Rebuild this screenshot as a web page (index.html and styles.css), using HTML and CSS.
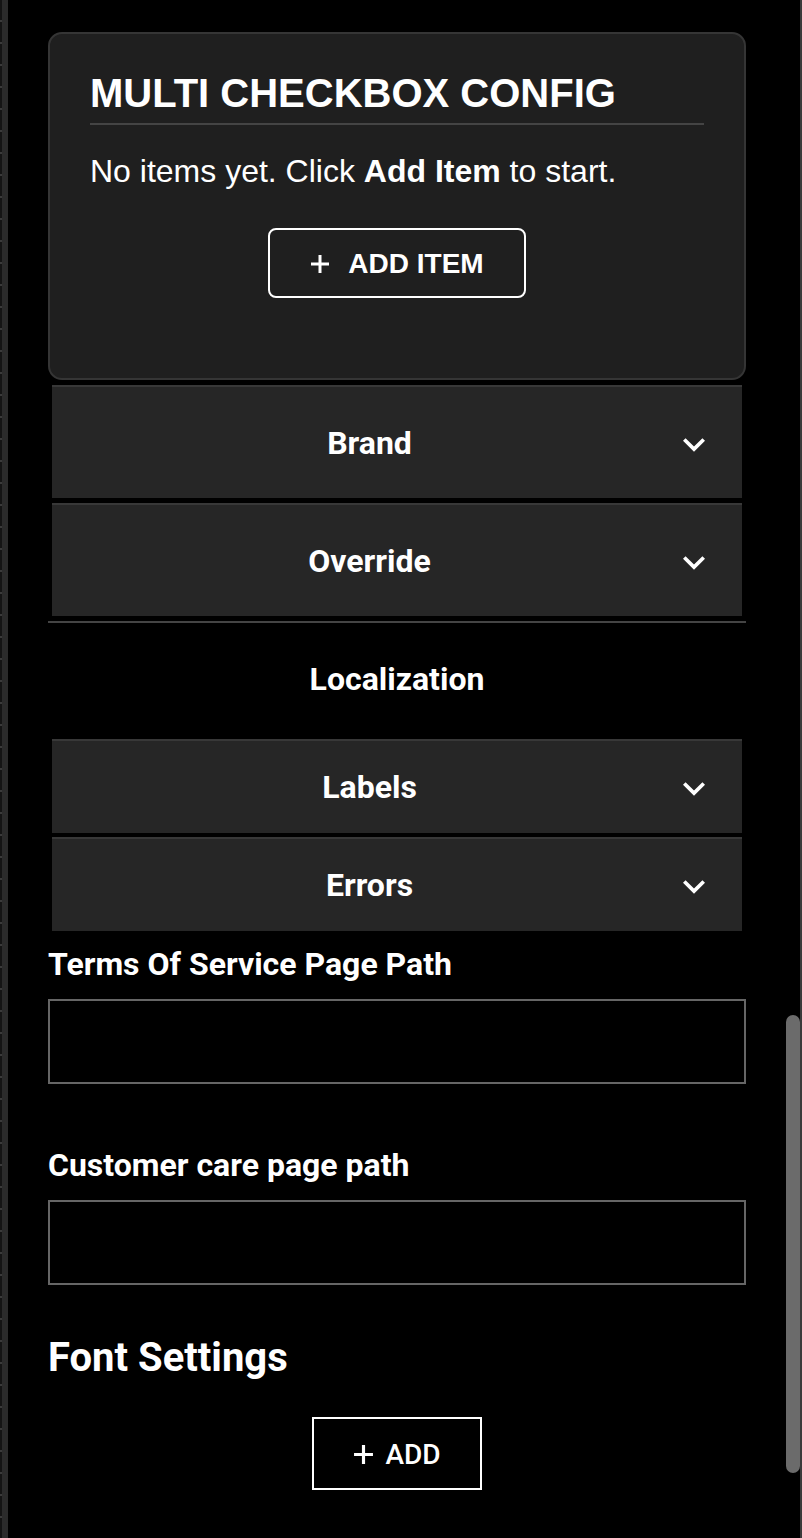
FILE: index.html
```html
<!DOCTYPE html>
<html lang="en">
<head>
<meta charset="utf-8">
<title>Config</title>
<link rel="stylesheet" href="styles.css">
</head>
<body>
<div class="app">
  <div class="gutter"></div>
  <main class="panel">
    <section class="card">
      <h2 class="card-title">Multi Checkbox Config</h2>
      <p class="card-text">No items yet. Click <strong>Add Item</strong> to start.</p>
      <div class="btn-row">
        <button class="btn-item" type="button">
          <svg class="plus" width="20" height="20" viewBox="0 0 20 20"><path d="M10 1v18M1 10h18" stroke="#fff" stroke-width="3" fill="none"/></svg>
          <span>ADD ITEM</span>
        </button>
      </div>
    </section>

    <div class="accordion tall">
      <div class="acc-item">
        <span class="acc-title">Brand</span>
        <svg class="chev" width="22" height="14" viewBox="6 8.5 12 7.6" preserveAspectRatio="none"><path d="M16.59 8.59L12 13.17 7.41 8.59 6 10l6 6 6-6z" fill="#fff"/></svg>
      </div>
      <div class="acc-item">
        <span class="acc-title">Override</span>
        <svg class="chev" width="22" height="14" viewBox="6 8.5 12 7.6" preserveAspectRatio="none"><path d="M16.59 8.59L12 13.17 7.41 8.59 6 10l6 6 6-6z" fill="#fff"/></svg>
      </div>
    </div>

    <div class="divider"></div>

    <h3 class="section-title">Localization</h3>

    <div class="accordion short">
      <div class="acc-item">
        <span class="acc-title">Labels</span>
        <svg class="chev" width="22" height="14" viewBox="6 8.5 12 7.6" preserveAspectRatio="none"><path d="M16.59 8.59L12 13.17 7.41 8.59 6 10l6 6 6-6z" fill="#fff"/></svg>
      </div>
      <div class="acc-item">
        <span class="acc-title">Errors</span>
        <svg class="chev" width="22" height="14" viewBox="6 8.5 12 7.6" preserveAspectRatio="none"><path d="M16.59 8.59L12 13.17 7.41 8.59 6 10l6 6 6-6z" fill="#fff"/></svg>
      </div>
    </div>

    <label class="field-label first">Terms Of Service Page Path</label>
    <div class="field-input"></div>

    <label class="field-label">Customer care page path</label>
    <div class="field-input"></div>

    <h3 class="font-title">Font Settings</h3>
    <div class="btn-row add-row">
      <button class="btn-add" type="button">
        <svg class="plus" width="21" height="21" viewBox="0 0 20 20"><path d="M10 1v18M1 10h18" stroke="#fff" stroke-width="3" fill="none"/></svg>
        <span>ADD</span>
      </button>
    </div>
  </main>
  <div class="scrollbar"><div class="thumb"></div></div>
  <div class="edge"></div>
</div>
</body>
</html>
```

FILE: styles.css
```css
html, body {
  margin: 0;
  padding: 0;
  background: #000;
  color: #fff;
}

.app {
  display: flex;
  min-height: 1538px;
  background: #000;
}

.gutter {
  width: 8px;
  flex: none;
  background:
    repeating-linear-gradient(to bottom, transparent 0 20px, #3a3a3a 20px 22px) 0 0 / 2px 100% no-repeat,
    linear-gradient(to right, #141414 0 2px, #2b2b2b 2px);
}

.panel {
  flex: 1;
  min-width: 0;
  padding: 32px 40px 0 40px;
}

.scrollbar {
  width: 14px;
  flex: none;
}

.thumb {
  margin-top: 1015px;
  height: 458px;
  background: #6b6b6b;
  border-radius: 7px;
}

.edge {
  width: 2px;
  flex: none;
  background: #3a3a3a;
}

/* card */
.card {
  background: #1f1f1f;
  border: 2px solid #353535;
  border-radius: 14px;
  padding: 35px 40px 80px;
}

.card-title {
  margin: 0;
  padding-bottom: 6px;
  border-bottom: 2px solid #444;
  font-family: "Liberation Sans", Arial, sans-serif;
  font-weight: 700;
  font-size: 40px;
  line-height: 48px;
  text-transform: uppercase;
  color: #fff;
}

.card-text {
  margin: 26px 0 0;
  font-family: "Liberation Sans", Arial, sans-serif;
  font-size: 32px;
  line-height: 40px;
  color: #fff;
}

.btn-row {
  display: flex;
  justify-content: center;
  margin-top: 37px;
}

.btn-item {
  box-sizing: border-box;
  width: 258px;
  height: 70px;
  border: 2px solid #fff;
  border-radius: 8px;
  background: transparent;
  color: #fff;
  display: flex;
  align-items: center;
  justify-content: center;
  gap: 18px;
  padding: 2px 0 0;
  font-family: "Liberation Sans", Arial, sans-serif;
  font-weight: 700;
  font-size: 28px;
  line-height: 1;
}

/* accordions */
.accordion {
  margin: 0 4px;
  display: flex;
  flex-direction: column;
}

.accordion.tall {
  margin-top: 5px;
  gap: 5px;
}

.accordion.short {
  margin-top: 40px;
  gap: 4px;
}

.acc-item {
  box-sizing: border-box;
  display: flex;
  align-items: center;
  background: #262626;
  border-top: 2px solid #383838;
}

.tall .acc-item {
  height: 113px;
}

.short .acc-item {
  height: 94px;
}

.acc-title {
  flex: 1;
  text-align: center;
  padding-left: 4px;
  font-family: Roboto, "Noto Sans", sans-serif;
  font-weight: 700;
  font-size: 32px;
  line-height: 40px;
  color: #fff;
}

.chev {
  flex: none;
  margin-right: 37px;
  margin-top: 4px;
}

.divider {
  height: 2px;
  background: #444;
  margin-top: 5px;
}

.section-title {
  margin: 36px 0 0;
  text-align: center;
  font-family: Roboto, "Noto Sans", sans-serif;
  font-weight: 700;
  font-size: 32px;
  line-height: 40px;
}

.field-label {
  display: block;
  margin-top: 61px;
  font-family: Roboto, "Noto Sans", sans-serif;
  font-weight: 700;
  font-size: 32px;
  line-height: 40px;
}

.field-label.first {
  margin-top: 13px;
}

.field-input {
  box-sizing: border-box;
  height: 85px;
  margin-top: 15px;
  border: 2px solid #666;
  background: #000;
}

.font-title {
  margin: 49px 0 0;
  font-family: Roboto, "Noto Sans", sans-serif;
  font-weight: 700;
  font-size: 40px;
  line-height: 48px;
}

.add-row {
  margin-top: 35px;
}

.btn-add {
  box-sizing: border-box;
  width: 170px;
  height: 73px;
  border: 2px solid #fff;
  border-radius: 0;
  background: #000;
  color: #fff;
  display: flex;
  align-items: center;
  justify-content: center;
  gap: 11px;
  padding: 2px 0 0;
  font-family: Roboto, "Noto Sans", sans-serif;
  font-weight: 500;
  font-size: 28px;
  line-height: 1;
}
```
